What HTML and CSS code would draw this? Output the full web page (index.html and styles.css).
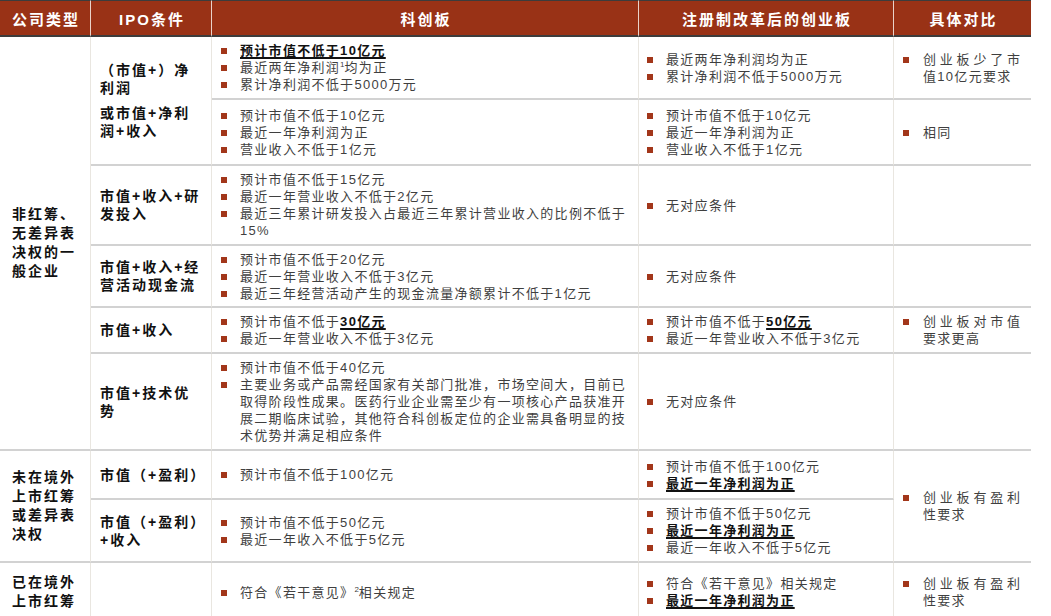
FILE: index.html
```html
<!DOCTYPE html>
<html lang="zh-CN">
<head>
<meta charset="utf-8">
<title>科创板与创业板IPO条件对比</title>
<link rel="stylesheet" href="styles.css">
</head>
<body>
<div class="tbl">
  <div class="h">公司类型</div>
  <div class="h">IPO条件</div>
  <div class="h">科创板</div>
  <div class="h">注册制改革后的创业板</div>
  <div class="h last">具体对比</div>

  <!-- row 1 -->
  <div class="cell type span6">非红筹、<br>无差异表<br>决权的一<br>般企业</div>
  <div class="cell cond span2"><p>（市值+）净<br>利润</p><p>或市值+净利<br>润+收入</p></div>
  <div class="cell list c3"><ul>
    <li><span class="t"><b class="u">预计市值不低于10亿元</b></span></li>
    <li><span class="t">最近两年净利润<sup>1</sup>均为正</span></li>
    <li><span class="t">累计净利润不低于5000万元</span></li>
  </ul></div>
  <div class="cell list c4"><ul>
    <li><span class="t">最近两年净利润均为正</span></li>
    <li><span class="t">累计净利润不低于5000万元</span></li>
  </ul></div>
  <div class="cell list c5 last"><ul>
    <li><span class="t"><span class="j">创业板少了市</span>值10亿元要求</span></li>
  </ul></div>

  <!-- row 2 -->
  <div class="cell list c3"><ul>
    <li><span class="t">预计市值不低于10亿元</span></li>
    <li><span class="t">最近一年净利润为正</span></li>
    <li><span class="t">营业收入不低于1亿元</span></li>
  </ul></div>
  <div class="cell list c4"><ul>
    <li><span class="t">预计市值不低于10亿元</span></li>
    <li><span class="t">最近一年净利润为正</span></li>
    <li><span class="t">营业收入不低于1亿元</span></li>
  </ul></div>
  <div class="cell list c5 last"><ul>
    <li><span class="t">相同</span></li>
  </ul></div>

  <!-- row 3 -->
  <div class="cell cond">市值+收入+研<br>发投入</div>
  <div class="cell list c3"><ul>
    <li><span class="t">预计市值不低于15亿元</span></li>
    <li><span class="t">最近一年营业收入不低于2亿元</span></li>
    <li><span class="t">最近三年累计研发投入占最近三年累计营业收入的比例不低于<br>15%</span></li>
  </ul></div>
  <div class="cell list c4"><ul>
    <li><span class="t">无对应条件</span></li>
  </ul></div>
  <div class="cell last"></div>

  <!-- row 4 -->
  <div class="cell cond">市值+收入+经<br>营活动现金流</div>
  <div class="cell list c3"><ul>
    <li><span class="t">预计市值不低于20亿元</span></li>
    <li><span class="t">最近一年营业收入不低于3亿元</span></li>
    <li><span class="t">最近三年经营活动产生的现金流量净额累计不低于1亿元</span></li>
  </ul></div>
  <div class="cell list c4"><ul>
    <li><span class="t">无对应条件</span></li>
  </ul></div>
  <div class="cell last"></div>

  <!-- row 5 -->
  <div class="cell cond">市值+收入</div>
  <div class="cell list c3"><ul>
    <li><span class="t">预计市值不低于<b class="u">30亿元</b></span></li>
    <li><span class="t">最近一年营业收入不低于3亿元</span></li>
  </ul></div>
  <div class="cell list c4"><ul>
    <li><span class="t">预计市值不低于<b class="u">50亿元</b></span></li>
    <li><span class="t">最近一年营业收入不低于3亿元</span></li>
  </ul></div>
  <div class="cell list c5 last"><ul>
    <li><span class="t"><span class="j">创业板对市值</span>要求更高</span></li>
  </ul></div>

  <!-- row 6 -->
  <div class="cell cond">市值+技术优<br>势</div>
  <div class="cell list c3"><ul>
    <li><span class="t">预计市值不低于40亿元</span></li>
    <li><span class="t">主要业务或产品需经国家有关部门批准，市场空间大，目前已<br>取得阶段性成果。医药行业企业需至少有一项核心产品获准开<br>展二期临床试验，其他符合科创板定位的企业需具备明显的技<br>术优势并满足相应条件</span></li>
  </ul></div>
  <div class="cell list c4"><ul>
    <li><span class="t">无对应条件</span></li>
  </ul></div>
  <div class="cell last"></div>

  <!-- row 7 -->
  <div class="cell type span2">未在境外<br>上市红筹<br>或差异表<br>决权</div>
  <div class="cell cond">市值（+盈利）</div>
  <div class="cell list c3"><ul>
    <li><span class="t">预计市值不低于100亿元</span></li>
  </ul></div>
  <div class="cell list c4"><ul>
    <li><span class="t">预计市值不低于100亿元</span></li>
    <li><span class="t"><b class="u">最近一年净利润为正</b></span></li>
  </ul></div>
  <div class="cell list c5 last span2"><ul>
    <li><span class="t"><span class="j">创业板有盈利</span>性要求</span></li>
  </ul></div>

  <!-- row 8 -->
  <div class="cell cond">市值（+盈利）<br>+收入</div>
  <div class="cell list c3"><ul>
    <li><span class="t">预计市值不低于50亿元</span></li>
    <li><span class="t">最近一年收入不低于5亿元</span></li>
  </ul></div>
  <div class="cell list c4"><ul>
    <li><span class="t">预计市值不低于50亿元</span></li>
    <li><span class="t"><b class="u">最近一年净利润为正</b></span></li>
    <li><span class="t">最近一年收入不低于5亿元</span></li>
  </ul></div>

  <!-- row 9 -->
  <div class="cell type">已在境外<br>上市红筹</div>
  <div class="cell cond"></div>
  <div class="cell list c3"><ul>
    <li><span class="t">符合《若干意见》<sup>2</sup>相关规定</span></li>
  </ul></div>
  <div class="cell list c4"><ul>
    <li><span class="t">符合《若干意见》相关规定</span></li>
    <li><span class="t"><b class="u">最近一年净利润为正</b></span></li>
  </ul></div>
  <div class="cell list c5 last"><ul>
    <li><span class="t"><span class="j">创业板有盈利</span>性要求</span></li>
  </ul></div>
</div>
</body>
</html>
```

FILE: styles.css
```css
* {
  box-sizing: border-box;
  margin: 0;
  padding: 0;
}

body {
  margin: 0;
  background: #ffffff;
  font-family: "Liberation Sans", "Noto Sans CJK SC", sans-serif;
}

.tbl {
  display: grid;
  width: 1031px;
  grid-template-columns: 91px 121px 427px 255px 137px;
  grid-template-rows: 37px 63px 66px 80px 62px 46px 97px 49px 63px 60px;
}

.h {
  display: flex;
  align-items: center;
  justify-content: center;
  padding-left: 2px;
  background: #993216;
  color: #ffffff;
  font-weight: bold;
  font-size: 15px;
  letter-spacing: 2px;
  border-top: 1px solid #3c3c3c;
  border-bottom: 2px solid #3c3c3c;
  border-right: 1px solid #ead3ca;
}

.h.last {
  border-right: none;
}

.cell {
  display: flex;
  flex-direction: column;
  justify-content: center;
  border-right: 1px solid #e9e6e0;
  border-bottom: 2px solid #d2d2d2;
}

.cell.last {
  border-right: none;
}

.span6 {
  grid-row: span 6;
}

.span2 {
  grid-row: span 2;
}

.type {
  padding-left: 12px;
  font-weight: bold;
  font-size: 14px;
  letter-spacing: 2px;
  line-height: 19px;
  color: #111111;
}

.cond {
  padding-left: 9px;
  font-weight: bold;
  font-size: 14px;
  letter-spacing: 2px;
  line-height: 18px;
  color: #111111;
}

.cond p + p {
  margin-top: 7px;
}

.list {
  font-size: 13px;
  letter-spacing: 1.3px;
  line-height: 17px;
  color: #3f3f3f;
}

.list.c3 {
  padding: 0 4px 0 9px;
}

.list.c4 {
  padding: 0 4px 0 8px;
}

.list.c5 {
  padding: 0 11px 0 9px;
}

.list ul {
  list-style: none;
}

.list li {
  display: flex;
  align-items: flex-start;
}

.list li::before {
  content: "";
  flex: 0 0 6px;
  width: 6px;
  height: 6px;
  margin: 6px 13px 0 0;
  background: #a2361a;
}

.list.c5 li::before {
  margin-right: 14px;
}

.t {
  display: block;
  flex: 1 1 auto;
  min-width: 0;
}

.j {
  display: block;
  text-align: justify;
  text-align-last: justify;
  letter-spacing: 0;
}

.u {
  color: #111111;
  font-weight: bold;
  text-decoration: underline;
  text-decoration-thickness: 1.5px;
  text-underline-offset: 2px;
}

sup {
  font-size: 8px;
  line-height: 0;
  letter-spacing: 0;
  vertical-align: 5px;
}
```
